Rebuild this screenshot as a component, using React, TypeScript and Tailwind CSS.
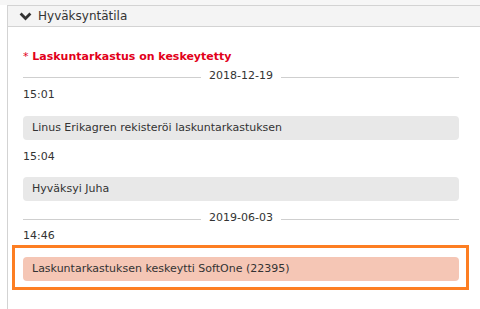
import { ReactNode } from "react";

const font = { fontFamily: '"DejaVu Sans", Verdana, sans-serif' };

function DateRow({ date, className = "" }: { date: string; className?: string }) {
  return (
    <div className={`flex items-center h-4 leading-4 ${className}`}>
      <div className="flex-1 h-px bg-[#cfcfcf] mt-[3px]" />
      <span className="mx-2 text-[#333]">{date}</span>
      <div className="flex-1 h-px bg-[#cfcfcf] mt-[3px]" />
    </div>
  );
}

function Time({ children, className = "" }: { children: ReactNode; className?: string }) {
  return <div className={`h-4 leading-4 text-[#333] ${className}`}>{children}</div>;
}

function Entry({ children, className = "", tone = "gray" }: { children: ReactNode; className?: string; tone?: "gray" | "pink" }) {
  return (
    <div
      className={`h-6 flex items-center pl-[9px] rounded-[4px] text-[#333] ${
        tone === "pink" ? "bg-[#f5c6b5]" : "bg-[#e8e8e8]"
      } ${className}`}
    >
      {children}
    </div>
  );
}

export default function App() {
  return (
    <div className="w-[480px] h-[309px] overflow-hidden bg-white text-[11px]" style={font}>
      <div className="h-[5px] bg-[#f6f6f6]" />
      <div className="ml-[7px] w-[500px] h-[304px] border-l border-t border-[#d3d3d3]">
        <div className="h-[21px] bg-[#f4f4f4] border-b border-[#d3d3d3] flex items-center pl-[11px]">
          <svg width="13" height="9" viewBox="0 0 13 9" className="mr-[6px]">
            <path d="M1.6 1.6 L6.5 6.5 L11.4 1.6" fill="none" stroke="#333" strokeWidth="2.8" />
          </svg>
          <span className="text-[#333] text-[12px]">Hyväksyntätila</span>
        </div>
        <div className="w-[451px] pl-[15px] pt-[22px]">
          <div className="h-[13px] leading-4 overflow-hidden font-bold text-[#e2001a]">
            <span className="font-normal">*</span> Laskuntarkastus on keskeytetty
          </div>
          <DateRow date="2018-12-19" className="mt-[6px]" />
          <Time className="mt-[3px]">15:01</Time>
          <Entry className="mt-[13px]">Linus Erikagren rekisteröi laskuntarkastuksen</Entry>
          <Time className="mt-[9px]">15:04</Time>
          <Entry className="mt-[12px]">Hyväksyi Juha</Entry>
          <DateRow date="2019-06-03" className="mt-[9px]" />
          <Time className="mt-[2px]">14:46</Time>
          <div className="-ml-[11px] -mr-[10px] mt-[1px] border-[3px] border-[#fd7e22] pl-[8px] pr-[7px] pt-[9px] pb-[6px]">
            <Entry tone="pink">Laskuntarkastuksen keskeytti SoftOne (22395)</Entry>
          </div>
        </div>
      </div>
    </div>
  );
}
